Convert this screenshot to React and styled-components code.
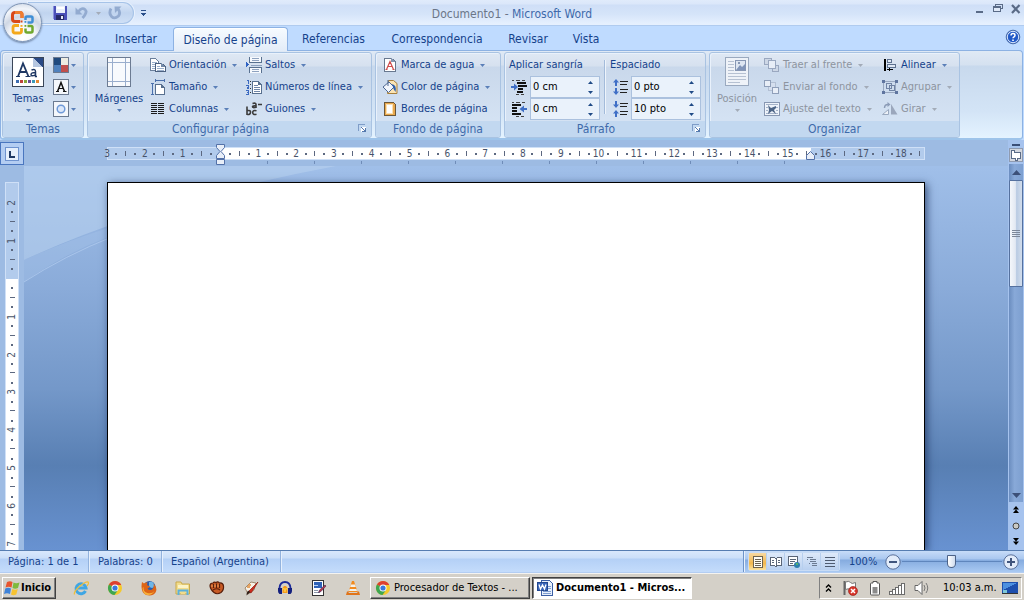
import React from 'react';
import styled, { createGlobalStyle, css } from 'styled-components';

const Global = createGlobalStyle`
  *, *::before, *::after { box-sizing: border-box; }
  html, body { margin: 0; }
  body, button, input {
    font-family: "DejaVu Sans Condensed", "DejaVu Sans", Verdana, sans-serif;
    font-size: 11px;
    line-height: 14px;
  }
  button { padding: 0; border: 0; background: none; color: inherit; cursor: default; }
  svg { display: block; flex: none; }
`;

const Window = styled.div`
  display: flex;
  flex-direction: column;
  height: 100vh;
  overflow: hidden;
  position: relative;
  background: #bfdbff;
  color: #15428b;
`;

/* ---------- title bar ---------- */

const TitleBar = styled.header`
  display: grid;
  grid-template-columns: 1fr auto 1fr;
  height: 26px;
  flex: none;
  background: linear-gradient(#e0ebfb 0, #dbe7fa 4px, #cfdff7 5px, #d5e4f9 14px, #e6f0fe 24px);
  border-bottom: 1px solid #b0cbef;
`;

const QuickAccess = styled.div`
  display: flex;
  align-items: center;
  padding: 2px 0 2px 28px;
`;

const QuickPill = styled.div`
  display: flex;
  align-items: center;
  gap: 6px;
  width: 106px;
  height: 22px;
  padding-left: 24px;
  border: 1px solid #a6c3e8;
  border-left: 0;
  border-radius: 0 11px 11px 0;
  background: linear-gradient(#d9e6f8, #c0d4ef 50%, #cfe0f6);
  box-shadow: 0 0 0 1px #e8f1fd;
`;

const CustomizeButton = styled.button`
  margin-left: 6px;
`;

const WindowTitle = styled.h1`
  margin: 0;
  padding-top: 7px;
  font-size: 12px;
  line-height: 14px;
  font-weight: normal;
  color: #3e6aaa;
  span { color: #6b7688; }
`;

const WindowButtons = styled.div`
  display: flex;
  justify-content: flex-end;
  gap: 2px;
  padding-top: 1px;
  button { width: 16px; height: 16px; }
`;

const Orb = styled.button`
  position: absolute;
  left: 3px;
  top: 3px;
  width: 39px;
  height: 39px;
  border-radius: 50%;
  border: 1px solid #7f95b5;
  background: radial-gradient(circle at 50% 90%, #ffffff 0, #f3f5f9 35%, #cfd7e4 55%, #f2f5fa 75%, #c3cede 100%);
  box-shadow: 0 1px 2px #6a7f9f;
  display: grid;
  place-items: center;
`;

/* ---------- tabs ---------- */

const TabBar = styled.nav`
  display: flex;
  height: 24px;
  flex: none;
  padding-left: 36px;
  align-items: flex-end;
  background: #bfdbff;
`;

const Tab = styled.button`
  width: ${(p) => p.$w}px;
  height: 23px;
  padding-top: 1px;
  font-size: 12px;
  position: relative;
  ${(p) => p.$active && css`
    z-index: 1;
    margin: 0 0 -1px 12px;
    height: 24px;
    border: 1px solid #8db2e3;
    border-bottom: 0;
    border-radius: 4px 4px 0 0;
    background: linear-gradient(#f6fbff, #e3ecf8);
    box-shadow: inset 0 1px 0 #ffffff;
  `}
`;

const HelpButton = styled.button`
  margin: 0 3px 5px auto;
`;

/* ---------- ribbon ---------- */

const Ribbon = styled.section`
  display: flex;
  gap: 3px;
  height: 90px;
  flex: none;
  margin: 0 1px 0 0;
  padding: 1px 1px 0;
  border: 1px solid #8db2e3;
  border-width: 1px 1px 2px;
  border-bottom-color: #9ec4ea;
  border-radius: 4px;
  background: linear-gradient(#dfe9f5 0, #d5e1f0 14px, #c8d9ed 15px, #d3e4f6 60px, #e4f3ff 100%);
`;

const GroupBox = styled.section`
  display: flex;
  flex-direction: column;
  flex: none;
  width: ${(p) => p.$w}px;
  border: 1px solid #a9c3e2;
  border-radius: 3px;
  box-shadow: inset 1px 1px 0 #e9f1fb;
  background: linear-gradient(#dfe8f4 0, #d6e1ef 13px, #c9d8eb 14px, #d4e2f3 66px);
  overflow: hidden;
`;

const GroupBody = styled.div`
  display: flex;
  flex: 1;
  align-items: flex-start;
  padding-top: 1px;
`;

const GroupTitle = styled.h2`
  display: flex;
  align-items: center;
  justify-content: center;
  position: relative;
  height: 16px;
  margin: 0;
  padding-right: ${(p) => (p.$launcher ? 18 : 0)}px;
  font-size: 12px;
  line-height: 14px;
  font-weight: normal;
  color: #3e6aaa;
  background: #c2d8f0;
`;

const Launcher = styled.button`
  position: absolute;
  right: 4px;
  top: 3px;
`;

const Column = styled.div`
  display: grid;
  grid-template-rows: repeat(3, 22px);
  flex: none;
  width: ${(p) => p.$w}px;
  padding-left: ${(p) => p.$pad || 0}px;
`;

const Command = styled.button`
  display: flex;
  align-items: center;
  gap: 3px;
  white-space: nowrap;
  color: ${(p) => (p.disabled ? '#8d949f' : '#15428b')};
  & > span { padding-right: 3px; }
`;

const BigCommand = styled.button`
  display: flex;
  flex-direction: column;
  align-items: center;
  flex: none;
  width: ${(p) => p.$w}px;
  padding-top: 3px;
  color: ${(p) => (p.disabled ? '#8d949f' : '#15428b')};
  & > span { padding: 5px 0 3px; }
`;

const SmallIconCommand = styled.button`
  display: flex;
  align-items: center;
  gap: 2px;
`;

const FieldLabel = styled.div`
  align-self: center;
`;

const Field = styled.div`
  display: flex;
  align-items: center;
  gap: 3px;
  padding-left: 2px;
`;

const SpinBox = styled.div`
  display: flex;
  width: 70px;
  height: 22px;
  border: 1px solid #abc1de;
  background: #eaf2fb;
`;

const SpinInput = styled.input`
  width: 50px;
  padding: 0 2px;
  border: 0;
  background: transparent;
  color: #000;
  outline: 0;
`;

const SpinButtons = styled.div`
  display: flex;
  flex-direction: column;
  flex: 1;
  button { flex: 1; display: grid; place-items: center; }
`;

const Separator = styled.div`
  width: 2px;
  height: 54px;
  margin: 6px 4px 0 3px;
  background: linear-gradient(90deg, #a3bbda 50%, #eef4fb 50%);
`;

/* ---------- editor ---------- */

const Editor = styled.div`
  display: flex;
  flex: 1;
  min-height: 0;
`;

const EditorMain = styled.div`
  display: flex;
  flex-direction: column;
  flex: 1;
  min-width: 0;
`;

const RulerRow = styled.div`
  display: flex;
  flex: none;
  height: 26px;
  background: #9dbbe3;
`;

const TabSelector = styled.button`
  display: grid;
  place-items: center;
  flex: none;
  width: 24px;
  height: 23px;
  margin-top: 2px;
  border: 1px solid #4a76bf;
  background: #b4cdf2;
`;

const RulerCenter = styled.div`
  display: flex;
  flex: 1;
  justify-content: center;
  padding-top: 7px;
`;

const HRulerStrip = styled.div`
  display: flex;
  justify-content: space-between;
  align-items: center;
  position: relative;
  flex: none;
  width: 818px;
  height: 13px;
  padding-right: 5px;
  background: linear-gradient(90deg, #b2cbec 113px, #fff 113px, #fff 704px, #b2cbec 704px);
  box-shadow: inset 0 0 0 1px #cfe0f7;
`;

const TabStops = styled.div`
  position: absolute;
  left: 114px;
  top: 14px;
  width: 590px;
  height: 3px;
  background: repeating-linear-gradient(90deg, transparent 0 46px, #6f8cb8 46px 47px);
`;

const VRuler = styled.div`
  flex: none;
  width: 24px;
  padding: 16px 5px 0;
  background: #9dbbe3;
  overflow: hidden;
`;

const VRulerStrip = styled.div`
  display: flex;
  flex-direction: column;
  justify-content: space-between;
  align-items: center;
  height: 372px;
  padding: 21px 0 10px;
  background: linear-gradient(#b2cbec 97px, #fff 97px);
  box-shadow: inset 0 0 0 1px #cfe0f7;
`;

const Mark = styled.span`
  display: flex;
  align-items: center;
  justify-content: center;
  flex: none;
  width: 0;
  height: 0;
  font-size: 10px;
  line-height: 12px;
  color: #47536a;
  ${(p) => p.$vertical && css`transform: rotate(-90deg);`}
  &::before {
    content: "";
    display: ${(p) => (p.$kind === 'number' ? 'none' : 'block')};
    flex: none;
    width: ${(p) => (p.$kind === 'dot' ? 2 : 1)}px;
    height: ${(p) => (p.$kind === 'dot' ? 2 : 5)}px;
    background: #5c6880;
  }
`;

const IndentMarker = styled.svg`
  position: absolute;
  left: ${(p) => p.$x}px;
  top: ${(p) => p.$y}px;
`;

const Workspace = styled.div`
  display: flex;
  flex: 1;
  min-height: 0;
`;

const Canvas = styled.main`
  display: flex;
  justify-content: center;
  position: relative;
  flex: 1;
  min-width: 0;
  padding-top: 16px;
  overflow: hidden;
  background: linear-gradient(#a0bfe9 0, #8aabd9 32%, #7498c9 58%, #587fb3 78%, #6892d1 100%);
`;

const Swoosh = styled.svg`
  position: absolute;
  left: 0;
  top: 0;
`;

const Paper = styled.article`
  position: relative;
  flex: none;
  width: 818px;
  border: 1px solid #000;
  border-bottom: 0;
  background: #fff;
  box-shadow: 2px 2px 8px rgba(25, 45, 85, 0.75);
`;

const ScrollColumn = styled.div`
  display: flex;
  flex-direction: column;
  align-items: center;
  flex: none;
  width: 16px;
  padding-top: 3px;
  background: #a6c3ee;
`;

const ScrollTrack = styled.div`
  display: flex;
  flex-direction: column;
  flex: 1;
  width: 14px;
  background: linear-gradient(90deg, #6b8dbf, #88a9d8 40%, #7d9fd0);
`;

const ScrollButton = styled.button`
  display: grid;
  place-items: center;
  flex: none;
  width: 100%;
  height: ${(p) => p.$h || 16}px;
  ${(p) => p.$last && css`margin-top: auto;`}
`;

const ScrollThumb = styled.div`
  display: grid;
  place-items: center;
  flex: none;
  height: 107px;
  border: 1px solid #55719f;
  border-radius: 1px;
  background: linear-gradient(90deg, #f4f7fb, #e3e9f3 45%, #b9cbe3 55%, #d3deed);
`;

/* ---------- status bar ---------- */

const StatusBar = styled.footer`
  display: flex;
  flex: none;
  height: 23px;
  border-top: 1px solid #567db1;
  border-bottom: 1px solid #b3cdf2;
  background: linear-gradient(#d9e8fc 0, #cbdff9 7px, #b4d0f6 8px, #c4dcfb 100%);
`;

const StatusCell = styled.button`
  width: ${(p) => p.$w}px;
  padding-left: ${(p) => p.$pad || 9}px;
  text-align: left;
  white-space: nowrap;
  border-right: 1px solid #93b3de;
  box-shadow: 1px 0 0 #e6f0fd;
`;

const ZoomArea = styled.div`
  display: flex;
  align-items: center;
  margin-left: auto;
  padding: 0 5px 0 4px;
  border-left: 1px solid #6e94c9;
  box-shadow: inset 1px 0 0 #e6f0fd;
  background: linear-gradient(#c7dcf8 0, #a9c7ef 8px, #85abdf 9px, #a9c9f2 100%);
`;

const ViewButtons = styled.div`
  display: flex;
  margin-right: 9px;
  border: 1px solid #c9dcf5;
  border-radius: 2px;
`;

const ViewButton = styled.button`
  display: grid;
  place-items: center;
  width: 18px;
  height: 17px;
  border-right: 1px solid #b7cfee;
  background: ${(p) => (p.$active ? 'linear-gradient(#f7d9a2, #f2b74c 60%, #fbe3a0)' : 'linear-gradient(#dde9f9, #b9d0f0)')};
`;

const ZoomValue = styled.button`
  width: 36px;
  text-align: left;
`;

const ZoomSlider = styled.input`
  appearance: none;
  width: 100px;
  height: 16px;
  margin: 0 1px;
  background: linear-gradient(#5f86bd, #5f86bd) center / 100% 1px no-repeat;
  &::-webkit-slider-thumb {
    appearance: none;
    width: 9px;
    height: 13px;
    border: 1px solid #4c6287;
    border-radius: 1px 1px 5px 5px;
    background: linear-gradient(90deg, #fff, #cfdcee);
  }
`;

/* ---------- task bar ---------- */

const TaskBar = styled.nav`
  display: flex;
  align-items: center;
  flex: none;
  height: 27px;
  padding: 1px 2px 0;
  border-top: 1px solid #f4f3f0;
  background: #d4d0c8;
  color: #000;
`;

const raised = css`
  border: 1px solid;
  border-color: #fff #404040 #404040 #fff;
  box-shadow: inset -1px -1px 0 #808080;
`;

const StartButton = styled.button`
  display: flex;
  align-items: center;
  gap: 1px;
  width: 54px;
  height: 22px;
  padding-left: 1px;
  margin-right: 8px;
  font-weight: bold;
  ${raised}
`;

const QuickLaunch = styled.button`
  display: grid;
  place-items: center;
  width: 34px;
  height: 22px;
`;

const TaskButton = styled.button`
  display: flex;
  align-items: center;
  gap: 3px;
  width: 160px;
  height: 22px;
  padding: 0 4px;
  margin-right: 2px;
  text-align: left;
  white-space: nowrap;
  ${(p) => (p.$active
    ? css`
      font-weight: bold;
      background: #fff;
      border: 1px solid;
      border-color: #404040 #fff #fff #404040;
      box-shadow: inset 1px 1px 0 #808080;`
    : raised)}
`;

const TaskLabel = styled.span`
  overflow: hidden;
`;

const Tray = styled.div`
  display: flex;
  align-items: center;
  width: 203px;
  height: 22px;
  margin-left: auto;
  padding-left: 4px;
  border: 1px solid;
  border-color: #808080 #fff #fff #808080;
`;

const TrayItem = styled.button`
  display: grid;
  place-items: center;
  flex: none;
  width: ${(p) => p.$w}px;
`;

const Clock = styled.time`
  flex: none;
  width: 71px;
  padding-left: 12px;
  white-space: nowrap;
`;

/* ---------- drawings ---------- */

const Icon = ({ w = 16, h = 16, soft, children }) => (
  <svg width={w} height={h} viewBox={`0 0 ${w} ${h}`} fill="none" aria-hidden="true"
    shapeRendering={soft ? 'auto' : 'crispEdges'}>{children}</svg>
);

const Down = ({ dim, color }) => (
  <Icon w={5} h={3} soft><path d="M0 0h5L2.500 3z" fill={color || (dim ? '#a3abb8' : '#5a7fb8')} /></Icon>
);
const Up = ({ color }) => <Icon w={5} h={3} soft><path d="M0 3h5L2.500 0z" fill={color} /></Icon>;

const OfficeLogo = () => (
  <Icon w={26} h={26} soft>
    <path d="M10 11.500H5q-2.500 0-2.500-2.500V5Q2.500 2.500 5 2.500h5q2 0 2 2V8" stroke="#d8481a" strokeWidth="3" />
    <path d="M5 2.500h5q2 0 2 2V8" stroke="#ef7d2e" strokeWidth="3" />
    <path d="M15.500 10V8q0-1.500 1.500-1.500h4q1.500 0 1.500 1.500v3q0 1.500-1.500 1.500h-3.500" stroke="#3f8fd6" strokeWidth="2.500" />
    <path d="M9 15.500H5q-2 0-2 2V21q0 2 2 2h4.500q2 0 2-2v-3" stroke="#f4a81c" strokeWidth="2.800" />
    <path d="M17.500 16h3.500q1.500 0 1.500 1.500v3.500q0 1.500-1.500 1.500h-4q-1.500 0-1.500-1.500v-2.500" stroke="#6fa82e" strokeWidth="2.500" />
    <path d="M10.500 10.500h2v2h-2z" fill="#d8481a" /><path d="M14.500 11h1.800v1.800h-1.800z" fill="#3f8fd6" />
    <path d="M10.500 15h2v1.800h-2z" fill="#f4a81c" /><path d="M14.500 15h1.800v1.800h-1.800z" fill="#6fa82e" />
  </Icon>
);

const SaveIcon = () => (
  <Icon>
    <path d="M1 1h14v14H2l-1-1z" fill="#4a50b8" />
    <path d="M4 1h9v7H4z" fill="#e9effb" /><path d="M5 2h7v2H5z" fill="#fff" />
    <path d="M4 10h8v5H4z" fill="#262a68" /><path d="M9 11h2v3H9z" fill="#e6ebf8" />
    <path d="M1 1h1v13H1z" fill="#8a90dc" />
  </Icon>
);
const UndoIcon = () => (
  <Icon soft>
    <path d="M4.500 6.500Q8 2 11 4.500t-2.500 8.500" stroke="#93abd0" strokeWidth="2.800" />
    <path d="M1.500 2.500v7h7z" fill="#93abd0" />
  </Icon>
);
const RedoIcon = () => (
  <Icon soft>
    <path d="M4 3.500Q1.500 8.500 4.500 11.500t7-.5q2.500-3.500-.5-7" stroke="#93abd0" strokeWidth="2.800" />
    <path d="M7.500 1.500h7L8 8z" fill="#93abd0" />
  </Icon>
);
const CustomizeIcon = () => (
  <Icon w={7} h={6}><path d="M1 0h5v1H1zM1 3h5v1H1zM2 4h3v1H2zM3 5h1v1H3z" fill="#2b4f8a" /></Icon>
);
const HelpIcon = () => (
  <Icon soft>
    <circle cx="8" cy="8" r="6.800" fill="#2159c8" stroke="#4a6ca8" /><circle cx="8" cy="8" r="5.700" stroke="#dce8fc" />
    <path d="M6 6.500q0-2 2-2t2 1.700q0 1-1 1.600t-1 1.500" stroke="#fff" strokeWidth="1.500" /><path d="M7.200 10.500h1.600v1.500H7.200z" fill="#fff" />
  </Icon>
);

const ThemesIcon = () => (
  <Icon w={32} h={30}>
    <path d="M.5.500h31v29H.5z" fill="#fff" stroke="#3a4658" />
    <path d="M21 1h10v10z" fill="#2a4a86" /><path d="M21 1v9h9z" fill="#b5c6e0" />
    <g shapeRendering="auto" stroke="#1f3864">
      <path d="M6 19.500l5-13 5.500 13M8 15h6.500" strokeWidth="1.800" />
      <path d="M4 19.500h4M13.500 19.500h5" /><path d="M19.500 13q4-1.500 4 1.500v5h1.500M23.500 15.500q-4.500 0-4.500 2.200t4.500.2" strokeWidth="1.500" />
    </g>
    <path d="M4 23h3v3H4z" fill="#3e6db0" /><path d="M8 23h3v3H8z" fill="#c0443c" /><path d="M12 23h3v3h-3z" fill="#8aa63c" />
    <path d="M16 23h3v3h-3z" fill="#6b4f96" /><path d="M20 23h3v3h-3z" fill="#3c9ab8" /><path d="M24 23h3v3h-3z" fill="#e58a34" />
  </Icon>
);
const ThemeColorsIcon = () => (
  <Icon><path d="M0 0h16v16H0z" fill="#6b7a90" /><path d="M1 1h7v7H1z" fill="#1f497d" /><path d="M8 1h7v7H8z" fill="#eeece1" />
    <path d="M1 8h7v7H1z" fill="#4f81bd" /><path d="M8 8h7v7H8z" fill="#c0504d" /></Icon>
);
const ThemeFontsIcon = () => (
  <Icon><path d="M.5.500h15v15H.5z" fill="#f4f7fb" stroke="#6b7a90" />
    <g shapeRendering="auto" stroke="#111"><path d="M4.500 12.500L8 3.500l3.500 9" strokeWidth="1.500" /><path d="M6 9.500h4M3 12.500h3M10 12.500h3.500" /></g></Icon>
);
const ThemeEffectsIcon = () => (
  <Icon><path d="M.5.500h15v15H.5z" fill="#f4f7fb" stroke="#6b7a90" />
    <circle cx="8" cy="8" r="3.800" shapeRendering="auto" fill="#dce8fa" stroke="#6f9ad8" strokeWidth="1.500" /></Icon>
);
const MarginsIcon = () => (
  <Icon w={24} h={30}>
    <path d="M.5.500h23v29H.5z" fill="#f8fafd" stroke="#6c7b92" />
    <path d="M5.500 1v28M18.500 1v28M1 5.500h22M1 24.500h22" stroke="#9aaecd" />
  </Icon>
);
const OrientationIcon = () => (
  <Icon>
    <path d="M.5 1.500h5l3 3v9h-8z" fill="#fff" stroke="#6a7f9c" /><path d="M2 5h5M2 7h5M2 9h5M2 11h5" stroke="#9bb0cc" />
    <path d="M5.500 6.500h6l4 3v5h-10z" fill="#fff" stroke="#4c6180" /><path d="M11 6v4h4z" fill="#7389a8" /><path d="M7 9h3M7 11h7M7 13h7" stroke="#9bb0cc" />
  </Icon>
);
const SizeIcon = () => (
  <Icon>
    <path d="M5.500 5.500h6l3 3v7h-9z" fill="#fff" stroke="#58708f" /><path d="M11 5v4h4z" fill="#58708f" />
    <path d="M5 1.500h10M5.500 0v3M14.500 0v3M2.500 4v11M1 4.500h3M1 15.500h3" stroke="#4a70ac" />
  </Icon>
);
const ColumnsIcon = () => (
  <Icon>{[2, 4, 6, 8, 10, 12].map((y) => <path key={y} d={`M1 ${y + 0.5}h6M8 ${y + 0.5}h6`} stroke="#1c1c1c" />)}</Icon>
);
const BreaksIcon = () => (
  <Icon>
    <path d="M3.500 0v5.500h12V0M3.500 16v-5.500h12V16" fill="#f6f9fd" stroke="#58708f" /><path d="M6 1.500h7M6 3.500h7M6 12.500h7M6 14.500h7" stroke="#8ea2bf" />
    <path d="M5 8h11" stroke="#8ea2bf" />
    <path d="M0 4.500l3 3L0 11z" fill="#2f62c2" />
  </Icon>
);
const LineNumbersIcon = () => (
  <Icon>
    <path d="M6.500 2.500h6l3 3v9h-9z" fill="#fff" stroke="#58708f" /><path d="M12 2v4h4z" fill="#58708f" /><path d="M8 6.500h4M8 8.500h6M8 10.500h6M8 12.500h6" stroke="#6f86a8" />
    <path d="M1 1.500h1.500v3M0 6.500h2.500v1.500H1v1.500h2M0 11.500h2.500v4H0M1 13.500h2" stroke="#3c6ac0" /><path d="M4 2h1v1H4zM4 5h1v1H4zM4 9h1v1H4zM4 13h1v1H4z" fill="#333" />
  </Icon>
);
const HyphenIcon = () => (
  <Icon soft>
    <g stroke="#3b3b3b" strokeWidth="1.600">
      <path d="M1 5.500v8.500M1 9.800q4-1 3.500 1.700T1 13.300" />
      <path d="M10.500 9.800q-3.800-1-3.800 1.700t3.800 1.700" />
      <path d="M6.500 2.500Q10 1.500 10 3.500V7M10 4.800q-3.500-.3-3.500 1t3.500.5" />
      <path d="M12 3.500h4" />
    </g>
  </Icon>
);
const WatermarkIcon = () => (
  <Icon>
    <path d="M2.500 1.500h7l4 3v10h-11z" fill="#fff" stroke="#68788f" /><path d="M9 1v4h4z" fill="#8496b0" />
    <path d="M4.500 12.500L8 4.500l3.500 8M6 9.500h4M3.500 12.500h2M10.500 12.500h2" stroke="#cf4d4d" strokeWidth="1.200" shapeRendering="auto" />
  </Icon>
);
const PageColorIcon = () => (
  <Icon soft>
    <path d="M6.500 1.500h5l3.500 3v10H5.500z" fill="#fbe4b4" stroke="#a8803c" />
    <path d="M1 8l6-5 5 5-5.500 5.500z" fill="#f2f6fc" stroke="#4d6791" /><path d="M6 1v6" stroke="#4d6791" />
    <path d="M10 5q5 1 3.500 8Q11 10 11 8z" fill="#2d5fae" />
  </Icon>
);
const PageBordersIcon = () => (
  <Icon><path d="M2.500 1.500h9l2 2v11h-11z" fill="#e9a94e" stroke="#6c5738" /><path d="M4.500 3.500h6v9h-6z" fill="#fff" stroke="#fae0b2" /></Icon>
);
const IndentIcon = ({ right }) => (
  <Icon>
    <path d={right ? 'M1 4h9M1 7h5M1 10h5M1 13h9' : 'M6 4h9M7 7h9M7 10h5M6 13h6'} stroke="#111" strokeWidth="2" />
    <path d="M1 1.500h2M5 1.500h4M11 1.500h3M5 15.500h3M10 15.500h3" stroke="#444" />
    <path d={right ? 'M16 7h-3V4.500L8.500 8l4.500 3.500V9h3z' : 'M0 7h3V4.500L7 8l-4 3.500V9H0z'} fill="#3f6fc6" shapeRendering="auto" />
  </Icon>
);
const SpacingIcon = ({ after }) => (
  <Icon>
    <path d="M8 2.500h8M8 5.500h7M8 10.500h8M8 13.500h7" stroke="#222" />
    <g fill="#3f6fc6" shapeRendering="auto">
      <path d={after ? 'M1 3.500h2V0h2v3.500h2L4 7z' : 'M1 3.500L4 0l3 3.500H5V7H3V3.500z'} />
      <path d={after ? 'M1 12.500L4 9l3 3.500H5V16H3v-3.500z' : 'M1 12.500h2V9h2v3.500h2L4 16z'} />
    </g>
  </Icon>
);
const PositionIcon = () => (
  <Icon w={24} h={30}>
    <path d="M.5.500h23v28H.5z" fill="#eef2f8" stroke="#9aa9bf" />
    <path d="M3 4.500h6M3 7.500h6M3 10.500h6M3 13.500h6M3 16.500h18M3 19.500h18M3 22.500h18M3 25.500h12" stroke="#b6c1d2" />
    <path d="M10.500 3.500h10v10h-10z" fill="#dde5f1" stroke="#8797b4" />
    <path d="M11 13l4-5 2 2 3-3v6z" fill="#8195b9" shapeRendering="auto" /><path d="M13 5h2v2h-2z" fill="#8797b4" />
  </Icon>
);
const FrontIcon = () => (
  <Icon><path d="M.5 1.500h7v6h-7zM8.500 8.500h6v6h-6z" fill="#cdd7e6" stroke="#9aa8c0" /><path d="M4.500 3.500h7v8h-7z" fill="#e8eef7" stroke="#9aa8c0" /></Icon>
);
const BackIcon = () => (
  <Icon><path d="M4.500 3.500h7v8h-7z" fill="#d5dfee" stroke="#b3c0d4" /><path d="M.5 1.500h6v6h-6zM8.500 8.500h6v6h-6z" fill="#e8eef7" stroke="#8f9fb9" /></Icon>
);
const WrapIcon = () => (
  <Icon>
    <path d="M.5 1.500h15v13H.5z" fill="#eef3fa" stroke="#8797b2" /><path d="M2 3.500h12M2 12.500h12M2 6h2M2 9h2M12 6h2M12 9h2" stroke="#a5b3c9" />
    <path d="M4 4l3 3 5-2v2l-2 2 2 4-4-3-4 3 1-4z" fill="#4d6587" shapeRendering="auto" />
  </Icon>
);
const AlignIcon = () => (
  <Icon>
    <path d="M2 2h2v12H2z" fill="#000" /><path d="M5.500 2.500h4v3h-4zM5.500 7.500h8v3h-8z" fill="#dfe8f4" stroke="#5d718f" />
    <path d="M5 12.500h6M7 11v3M6 12v1" stroke="#000" />
  </Icon>
);
const GroupIcon = () => (
  <Icon>
    <path d="M1.500 2.500h12v11h-12z" stroke="#98a7c0" /><path d="M4.500 4.500h5v5h-5zM7.500 6.500h5v5h-5z" stroke="#7083a5" />
    <path d="M0 1h3v3H0zM13 1h3v3h-3zM0 12h3v3H0zM13 12h3v3h-3z" fill="#5f75a0" />
  </Icon>
);
const RotateIcon = () => (
  <Icon soft>
    <path d="M.5 13.500l6-5v5z" fill="#eef2f8" stroke="#9aa9bf" /><path d="M9 3l6.500 10.500H9z" fill="#9ba7bc" />
    <path d="M2.500 7Q2.500 3.500 6 3.500" stroke="#8c9cb7" strokeWidth="1.500" /><path d="M5.500 1l3 2.500-3 2.500z" fill="#8c9cb7" />
  </Icon>
);
const LauncherIcon = () => (
  <Icon w={9} h={9}><path d="M.5 7V.500H7" stroke="#7f9dc8" /><path d="M3 3h5v5H3z" fill="#fff" /><path d="M3 3l4 4M7.500 4v3.500H4" stroke="#5579ad" /></Icon>
);

const MinimizeIcon = () => <Icon><path d="M4 10h7v2H4z" fill="#5a6b87" /></Icon>;
const RestoreIcon = () => (
  <Icon><path d="M5.500 5V3.500h7v4H11" stroke="#5a6b87" /><path d="M5 3h8v1H5z" fill="#5a6b87" /><path d="M3.500 5.500h7v5h-7z" fill="#dfe9f8" stroke="#5a6b87" /><path d="M3 5h8v2H3z" fill="#5a6b87" /></Icon>
);
const CloseIcon = () => <Icon soft><path d="M4 4l7.500 8M11.500 4L4 12" stroke="#5a6b87" strokeWidth="2.200" /></Icon>;

const PrintLayoutIcon = () => <Icon w={12} h={12}><path d="M1.500.500h9v11h-9z" fill="#fffdf4" stroke="#6b6250" /><path d="M3 3.500h6M3 5.500h6M3 7.500h6M3 9.500h6" stroke="#6b6250" /></Icon>;
const ReadingIcon = () => <Icon w={12} h={12}><path d="M.5 1.500h4l1.500 1 1.500-1h4v8h-4L6 11 4.500 9.500h-4z" fill="#fff" stroke="#5a6577" /><path d="M6 2v9M2 4.500h2M2 6.500h2M8 4.500h2M8 6.500h2" stroke="#5a6577" /></Icon>;
const WebIcon = () => <Icon w={12} h={12}><path d="M.5.500h9v9h-9z" fill="#fff" stroke="#5a6577" /><path d="M2 3.500h6M2 5.500h5M2 7.500h3" stroke="#5a6577" /><circle cx="9" cy="9" r="3" fill="#2f7fae" shapeRendering="auto" /><path d="M8 7h2v2H8z" fill="#53b06a" /></Icon>;
const OutlineIcon = () => <Icon w={12} h={12}><path d="M1 1.500h6M4 3.500h6M4 5.500h6M6 7.500h5M6 9.500h5M1 3.500h1M3 7.500h1" stroke="#6c7b92" /></Icon>;
const DraftIcon = () => <Icon w={12} h={12}><path d="M1 1.500h10M1 4.500h10M1 7.500h10M1 10.500h10" stroke="#4e5b70" /></Icon>;
const RoundIcon = ({ plus }) => (
  <Icon w={16} h={16} soft>
    <circle cx="8" cy="8" r="7.200" fill="#e2ecfa" stroke="#5a7099" /><path d={plus ? 'M4 8h8M8 4v8' : 'M4 8h8'} stroke="#40557d" strokeWidth="2" />
  </Icon>
);

const WindowsFlag = () => (
  <Icon soft>
    <path d="M3 2q3-1.500 5.500 0L7.500 7.500Q4.500 6 1.500 7.500z" fill="#e8552d" /><path d="M9.500 2.500Q12 4 15.500 2.500L14 8q-3 1.500-5.500 0z" fill="#7fba3c" />
    <path d="M1.300 8.500Q4 7 7 8.500L6 14Q3 12.500 0 14z" fill="#3f83d8" /><path d="M8.300 9q3 1.500 5.500 0l-1.500 5.500q-3 1.500-5.300 0z" fill="#f7c331" />
  </Icon>
);
const IeIcon = () => (
  <Icon soft>
    <path d="M12.500 11A5 5 0 1 1 13 8H5" stroke="#3fa6e4" strokeWidth="3" />
    <path d="M1.500 14.500q-1-3 5-8t8.500-4.500q1.500 1-1 4" stroke="#f0bf3a" strokeWidth="1.300" />
  </Icon>
);
const ChromeIcon = () => (
  <Icon soft>
    <circle cx="8" cy="8" r="7" fill="#f4c92c" /><path d="M8 8L1.900 4.500A7 7 0 0 1 14.100 4.500L14 5H8z" fill="#dd3f30" />
    <path d="M8 8L1.900 4.500A7 7 0 0 0 7.500 15L11 10z" fill="#3fa650" /><circle cx="8" cy="8" r="3.500" fill="#fff" /><circle cx="8" cy="8" r="2.600" fill="#3a78dc" />
  </Icon>
);
const FirefoxIcon = () => (
  <Icon soft>
    <circle cx="8.500" cy="7" r="6" fill="#2a5db0" /><path d="M8 2q4-1 5 2t-2 4l-3-1z" fill="#6cb6e8" />
    <path d="M1 2l2 1.500Q4.500 2 6.500 2.500L6 5q1 1 3 1-1 2-2.500 2.500Q8 11 11 9.500q2.500-2 1.500-6 4.500 5 2 9T5 15Q-1 12 1 2z" fill="#dd6416" /><path d="M2.500 7q-.5 5 4 6t7-2q-2.500 4.500-7 4T1.500 8z" fill="#f6b13a" />
  </Icon>
);
const FolderIcon = () => (
  <Icon soft>
    <path d="M1 2h5l1 2h7.500v10H1z" fill="#f2dc8c" stroke="#c9a94a" /><path d="M3 5h10v3H3z" fill="#fbf3c8" />
    <path d="M3.500 15v-4.500h9V15" stroke="#5bb0dc" strokeWidth="2" /><path d="M6 12h4v2H6z" fill="#f2dc8c" />
  </Icon>
);
const FistIcon = () => (
  <Icon soft>
    <path d="M1 6q0-3 3-3 1-1.500 3-.500Q9 1 10.500 3 14 2.500 14.500 6 15 10 12 12.500q-4 2.500-7 0Q1.500 10 1 6z" fill="#c85a24" stroke="#571f0c" strokeWidth="1.200" />
    <path d="M4.500 4v4M7.500 3.500v4.500M10.500 4v4M4 10q4-2.500 7 0" stroke="#571f0c" strokeWidth="1.200" /><path d="M3 5v2M6 4.500V7M9 4.500V7" stroke="#f0a05c" />
  </Icon>
);
const BrushIcon = () => (
  <Icon soft>
    <path d="M2 8l6-6 5 1-2 7-6 4z" fill="#f6f1e7" stroke="#a08a70" /><path d="M15 2L8 13l-2.500-1.500z" fill="#d42a1e" stroke="#8e1b10" strokeWidth=".7" />
    <path d="M5 10.500l2.500 1.500-4 3.500q0-3 1.500-5z" fill="#332018" /><path d="M4 7h3M5 5h3" stroke="#e08a3a" strokeWidth="1.500" />
  </Icon>
);
const AudacityIcon = () => (
  <Icon soft>
    <path d="M2.500 10V8Q3 2 8 2t5.500 6v2" stroke="#1c2a9a" strokeWidth="1.800" /><path d="M1 8h4v6H2.500Q1 13 1 11zM11 8h4v3q0 2-1.500 3H11z" fill="#14207e" />
    <path d="M5.500 8L7 6h2l1.500 2v5h-5z" fill="#f59a1c" /><path d="M5.500 10l1.500-2 1 4 1-4 1.500 2" stroke="#fcd04a" />
  </Icon>
);
const EditorIcon = () => (
  <Icon>
    <path d="M1.500.500h11v15h-11z" fill="#fff" stroke="#333" /><path d="M3 2h8v6H3z" fill="#2e62b8" /><path d="M3 5h4v1H3z" fill="#bcd4f4" />
    <path d="M3 10.500h4M3 12.500h6" stroke="#8a95a8" /><path d="M15 6l-5 5.500-2.500 1 1-2.500 5.500-5z" fill="#b8344c" stroke="#3a2a50" strokeWidth=".6" shapeRendering="auto" />
  </Icon>
);
const ConeIcon = () => (
  <Icon soft>
    <path d="M7 1h2l3.500 11h-9z" fill="#f28a1e" /><path d="M6 4.500h4l.8 2.500H5.200zM4.600 9h6.800l.6 2H4z" fill="#f4f1ec" />
    <path d="M2 11.500h2l-.5 1.500h9l-.5-1.500h2l1 3.500H1z" fill="#e0741a" />
  </Icon>
);
const WordIcon = () => (
  <Icon>
    <path d="M4.500.500h8l3 3v12h-11z" fill="#e8f0fc" stroke="#3c5fa4" /><path d="M11 6h3M11 8h3M6 13h8M6 11h8" stroke="#7d9cd0" />
    <path d="M.5 2.500h10v8H.5z" fill="#3a66b8" stroke="#22478f" /><path d="M2 4.500l1.500 4.500L5.500 5l2 4L9 4.500" stroke="#fff" strokeWidth="1.300" shapeRendering="auto" />
  </Icon>
);
const ChevronsIcon = () => <Icon w={7} h={8} soft><path d="M1 3.500l2.500-2.500L6 3.500M1 7.500L3.500 5 6 7.500" stroke="#000" strokeWidth="1.400" /></Icon>;
const FlagIcon = () => (
  <Icon soft>
    <path d="M2.500 1v14" stroke="#666" strokeWidth="2" /><path d="M3.500 2q4-1.500 5 .5t5 0v7q-3 1.500-5 0t-5 0z" fill="#fff" stroke="#777" />
    <circle cx="11" cy="11" r="4.500" fill="#d8352a" stroke="#8e1b14" strokeWidth=".6" /><path d="M9 9l4 4M13 9l-4 4" stroke="#fff" strokeWidth="1.500" />
  </Icon>
);
const BatteryIcon = () => <Icon soft><path d="M6 1.500h4v1.500h1.500q1 0 1 1v10q0 1-1 1h-7q-1 0-1-1V4q0-1 1-1H6z" fill="#fff" stroke="#555" /><path d="M5.500 7h5v6.500h-5z" fill="#8a8a8a" /></Icon>;
const SignalIcon = () => (
  <Icon w={17} h={14}>
    {[0, 1, 2, 3, 4].map((i) => <rect key={i} x={i * 3 + 0.5} y={10.5 - i * 2} width="3" height={3 + i * 2 - 0.5} fill="#fff" stroke="#6b6b6b" />)}
  </Icon>
);
const SpeakerIcon = () => <Icon soft><path d="M1 5.500h3l4-4v13l-4-4H1z" fill="#fff" stroke="#666" /><path d="M10 5q2 3 0 6M12 3q3.500 5 0 10" stroke="#777" /></Icon>;
const DesktopIcon = () => <Icon><path d="M0 2h16v11H0z" fill="#1e4fae" /><path d="M1 3h14L1 10z" fill="#4d90e0" /><path d="M0 13h16v1H0z" fill="#333" /><path d="M1 10h4v3H1z" fill="#7ec8d8" /></Icon>;

/* ---------- rulers ---------- */

const marks = (from, to, vertical) => {
  const out = [];
  for (let q = from; q <= to; q += 1) {
    const kind = q % 4 === 0 ? 'number' : q % 2 === 0 ? 'line' : 'dot';
    out.push(
      <Mark key={q} $kind={kind} $vertical={vertical}>{kind === 'number' && q !== 0 ? Math.abs(q) / 4 : null}</Mark>,
    );
  }
  return out;
};

const HorizontalRuler = () => (
  <HRulerStrip>
    {marks(-12, 74)}
    <TabStops />
    <IndentMarker $x={109} $y={-3} width="9" height="22" viewBox="0 0 9 22">
      <path d="M.5.500h8v3L5 7.500l3.500 4v3h-8v-3L4 7.500.5 3.500zM.5 15.500h8v5h-8z" fill="#e8eef8" stroke="#5371a8" />
    </IndentMarker>
    <IndentMarker $x={699} $y={4} width="9" height="9" viewBox="0 0 9 9">
      <path d="M.5 8.500v-4l4-4 4 4v4z" fill="#e8eef8" stroke="#5371a8" />
    </IndentMarker>
  </HRulerStrip>
);

/* ---------- composed parts ---------- */

const Cmd = ({ icon, label, dim, plain }) => (
  <Command disabled={dim}>{icon}<span>{label}</span>{!plain && <Down dim={dim} />}</Command>
);

const Group = ({ title, w, launcher, children }) => (
  <GroupBox $w={w} aria-label={title}>
    <GroupBody>{children}</GroupBody>
    <GroupTitle $launcher={launcher}>
      {title}
      {launcher && <Launcher aria-label={`Opciones de ${title}`}><LauncherIcon /></Launcher>}
    </GroupTitle>
  </GroupBox>
);

const Spin = ({ icon, label, value }) => (
  <Field>
    {icon}
    <SpinBox>
      <SpinInput aria-label={label} defaultValue={value} />
      <SpinButtons>
        <button aria-label={`Aumentar ${label}`}><Up color="#1f4a86" /></button>
        <button aria-label={`Reducir ${label}`}><Down color="#1f4a86" /></button>
      </SpinButtons>
    </SpinBox>
  </Field>
);

const tabs = [
  ['Inicio', 75], ['Insertar', 50], ['Diseño de página', 115, true], ['Referencias', 91],
  ['Correspondencia', 116], ['Revisar', 66], ['Vista', 50],
];

const launchers = [
  ['Internet Explorer', IeIcon], ['Chrome', ChromeIcon], ['Firefox', FirefoxIcon], ['Explorador', FolderIcon],
  ['Juego', FistIcon], ['Pintura', BrushIcon], ['Audacity', AudacityIcon], ['Editor', EditorIcon], ['VLC', ConeIcon],
];

const views = [
  ['Diseño de impresión', PrintLayoutIcon], ['Lectura', ReadingIcon], ['Diseño web', WebIcon],
  ['Esquema', OutlineIcon], ['Borrador', DraftIcon],
];

export default function App() {
  return (
    <Window>
      <Global />
      <TitleBar>
        <QuickAccess>
          <QuickPill>
            <button aria-label="Guardar"><SaveIcon /></button>
            <button aria-label="Deshacer"><UndoIcon /></button>
            <Down dim />
            <button aria-label="Rehacer"><RedoIcon /></button>
          </QuickPill>
          <CustomizeButton aria-label="Personalizar"><CustomizeIcon /></CustomizeButton>
        </QuickAccess>
        <WindowTitle><span>Documento1 - </span>Microsoft Word</WindowTitle>
        <WindowButtons>
          <button aria-label="Minimizar"><MinimizeIcon /></button>
          <button aria-label="Restaurar"><RestoreIcon /></button>
          <button aria-label="Cerrar"><CloseIcon /></button>
        </WindowButtons>
      </TitleBar>
      <TabBar>
        {tabs.map(([label, w, active]) => <Tab key={label} $w={w} $active={active}>{label}</Tab>)}
        <HelpButton aria-label="Ayuda"><HelpIcon /></HelpButton>
      </TabBar>
      <Orb aria-label="Botón de Office"><OfficeLogo /></Orb>

      <Ribbon>
        <Group title="Temas" w={82}>
          <BigCommand $w={50}><ThemesIcon /><span>Temas</span><Down /></BigCommand>
          <Column $w={30}>
            <SmallIconCommand aria-label="Colores"><ThemeColorsIcon /><Down /></SmallIconCommand>
            <SmallIconCommand aria-label="Fuentes"><ThemeFontsIcon /><Down /></SmallIconCommand>
            <SmallIconCommand aria-label="Efectos"><ThemeEffectsIcon /><Down /></SmallIconCommand>
          </Column>
        </Group>
        <Group title="Configurar página" w={285} launcher>
          <BigCommand $w={62}><MarginsIcon /><span>Márgenes</span><Down /></BigCommand>
          <Column $w={96}>
            <Cmd icon={<OrientationIcon />} label="Orientación" />
            <Cmd icon={<SizeIcon />} label="Tamaño" />
            <Cmd icon={<ColumnsIcon />} label="Columnas" />
          </Column>
          <Column $w={120}>
            <Cmd icon={<BreaksIcon />} label="Saltos" />
            <Cmd icon={<LineNumbersIcon />} label="Números de línea" />
            <Cmd icon={<HyphenIcon />} label="Guiones" />
          </Column>
        </Group>
        <Group title="Fondo de página" w={126}>
          <Column $w={124} $pad={6}>
            <Cmd icon={<WatermarkIcon />} label="Marca de agua" />
            <Cmd icon={<PageColorIcon />} label="Color de página" />
            <Cmd icon={<PageBordersIcon />} label="Bordes de página" plain />
          </Column>
        </Group>
        <Group title="Párrafo" w={202} launcher>
          <Column $w={96} $pad={4}>
            <FieldLabel>Aplicar sangría</FieldLabel>
            <Spin icon={<IndentIcon />} label="Sangría izquierda" value="0 cm" />
            <Spin icon={<IndentIcon right />} label="Sangría derecha" value="0 cm" />
          </Column>
          <Separator />
          <Column $w={94}>
            <FieldLabel>Espaciado</FieldLabel>
            <Spin icon={<SpacingIcon />} label="Espaciado antes" value="0 pto" />
            <Spin icon={<SpacingIcon after />} label="Espaciado después" value="10 pto" />
          </Column>
        </Group>
        <Group title="Organizar" w={251}>
          <BigCommand $w={54} disabled><PositionIcon /><span>Posición</span><Down dim /></BigCommand>
          <Column $w={118}>
            <Cmd icon={<FrontIcon />} label="Traer al frente" dim />
            <Cmd icon={<BackIcon />} label="Enviar al fondo" dim />
            <Cmd icon={<WrapIcon />} label="Ajuste del texto" dim />
          </Column>
          <Column $w={76}>
            <Cmd icon={<AlignIcon />} label="Alinear" />
            <Cmd icon={<GroupIcon />} label="Agrupar" dim />
            <Cmd icon={<RotateIcon />} label="Girar" dim />
          </Column>
        </Group>
      </Ribbon>

      <Editor>
        <EditorMain>
          <RulerRow>
            <TabSelector aria-label="Tabulación izquierda">
              <Icon><path d="M1.500 1.500h13v13h-13z" fill="#e6effc" stroke="#6f93cf" /><path d="M6 5v5.500h5" stroke="#1f3864" strokeWidth="2" /></Icon>
            </TabSelector>
            <RulerCenter><HorizontalRuler /></RulerCenter>
          </RulerRow>
          <Workspace>
            <VRuler><VRulerStrip>{marks(-8, 28, true)}</VRulerStrip></VRuler>
            <Canvas>
              <Swoosh width="320" height="120" viewBox="0 0 320 120" aria-hidden="true">
                <path d="M0 0h312Q130 34 0 94z" fill="#b8d0ef" opacity=".6" />
                <path d="M0 94Q40 76 84 62v9Q40 88 0 116z" fill="#a9c5ea" opacity=".35" />
                <path d="M0 116Q40 90 90 70" fill="none" stroke="#b4cdf0" opacity=".7" />
              </Swoosh>
              <Paper aria-label="Documento1" />
            </Canvas>
          </Workspace>
        </EditorMain>
        <ScrollColumn>
          <Icon w={8} h={3}><path d="M0 1h8v2H0z" fill="#3b4f78" /></Icon>
          <ScrollButton $h={18} aria-label="Regla">
            <Icon w={14} h={14}>
              <path d="M.5.500h13v13H.5z" fill="#d3d7df" stroke="#8f9bb1" />
              <path d="M2.500 2.500h3v2h6v6h-3v2h-2v-2h-4z" fill="#fff" stroke="#5a6b87" />
            </Icon>
          </ScrollButton>
          <ScrollTrack>
            <ScrollButton aria-label="Subir"><Icon w={9} h={5} soft><path d="M0 5h9L4.500 0z" fill="#3c5078" /></Icon></ScrollButton>
            <ScrollThumb><Icon w={8} h={8}><path d="M0 .500h8M0 2.500h8M0 4.500h8M0 6.500h8" stroke="#7c8798" /></Icon></ScrollThumb>
            <ScrollButton $h={14} $last aria-label="Bajar"><Icon w={9} h={5} soft><path d="M0 0h9L4.500 5z" fill="#3c5078" /></Icon></ScrollButton>
          </ScrollTrack>
          <ScrollButton aria-label="Página anterior"><Icon w={6} h={8} soft><path d="M0 3.500L3 0l3 3.500zM0 7L3 3.500 6 7z" fill="#000" /></Icon></ScrollButton>
          <ScrollButton aria-label="Seleccionar objeto"><Icon w={8} h={8} soft><circle cx="4" cy="4" r="3" fill="#c9c9c4" stroke="#444" /></Icon></ScrollButton>
          <ScrollButton aria-label="Página siguiente"><Icon w={6} h={8} soft><path d="M0 0h6L3 3.500zM0 3.500h6L3 7z" fill="#000" /></Icon></ScrollButton>
        </ScrollColumn>
      </Editor>

      <StatusBar>
        <StatusCell $w={89} $pad={8}>Página: 1 de 1</StatusCell>
        <StatusCell $w={73}>Palabras: 0</StatusCell>
        <StatusCell $w={119}>Español (Argentina)</StatusCell>
        <ZoomArea>
          <ViewButtons>
            {views.map(([label, I], i) => <ViewButton key={label} aria-label={label} $active={i === 0}><I /></ViewButton>)}
          </ViewButtons>
          <ZoomValue>100%</ZoomValue>
          <button aria-label="Alejar"><RoundIcon /></button>
          <ZoomSlider type="range" aria-label="Zoom" min="0" max="100" defaultValue="49" />
          <button aria-label="Acercar"><RoundIcon plus /></button>
        </ZoomArea>
      </StatusBar>

      <TaskBar>
        <StartButton><WindowsFlag />Inicio</StartButton>
        {launchers.map(([label, I]) => <QuickLaunch key={label} aria-label={label}><I /></QuickLaunch>)}
        <TaskButton><ChromeIcon /><TaskLabel>Procesador de Textos - ...</TaskLabel></TaskButton>
        <TaskButton $active><WordIcon /><TaskLabel>Documento1 - Micros...</TaskLabel></TaskButton>
        <Tray>
          <TrayItem $w={9} aria-label="Mostrar iconos"><ChevronsIcon /></TrayItem>
          <TrayItem $w={34} aria-label="Centro de actividades"><FlagIcon /></TrayItem>
          <TrayItem $w={14} aria-label="Batería"><BatteryIcon /></TrayItem>
          <TrayItem $w={32} aria-label="Red"><SignalIcon /></TrayItem>
          <TrayItem $w={18} aria-label="Volumen"><SpeakerIcon /></TrayItem>
          <Clock>10:03 a.m.</Clock>
          <TrayItem $w={16} aria-label="Escritorio"><DesktopIcon /></TrayItem>
        </Tray>
      </TaskBar>
    </Window>
  );
}
